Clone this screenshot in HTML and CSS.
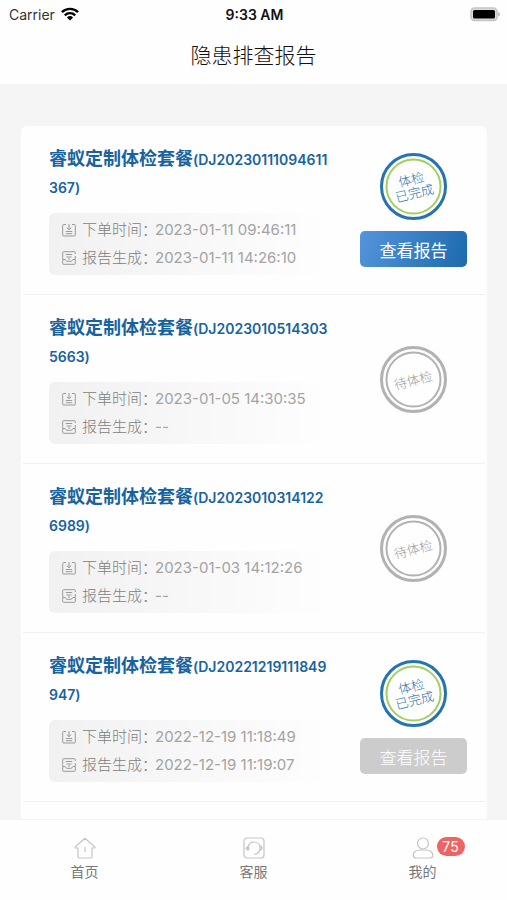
FILE: index.html
```html
<!DOCTYPE html>
<html lang="zh-CN">
<head>
<meta charset="utf-8">
<meta name="viewport" content="width=device-width, initial-scale=1">
<title>隐患排查报告</title>
<link rel="stylesheet" href="styles.css">
</head>
<body>
<svg class="sprite" aria-hidden="true">
  <symbol id="i-order" viewBox="0 0 14 14">
    <path d="M4 1.500H1.500a.8.8 0 0 0-.8.8v9.900a.8.8 0 0 0 .8.8h11a.8.8 0 0 0 .8-.8V2.300a.8.8 0 0 0-.8-.8H10M7 1v5.500M4.800 4.600 7 6.700l2.200-2.100M3.800 8.500h6.400M3.800 10.700h6.400"/>
  </symbol>
  <symbol id="i-report" viewBox="0 0 14 14">
    <path d="M13.300 3V1.500a.8.8 0 0 0-.8-.8h-11a.8.8 0 0 0-.8.8V8M13.300 5v3M.7 8.500h2.500l1.300 1.800h5l1.300-1.800h2.500v4a.8.8 0 0 1-.8.8h-11a.8.8 0 0 1-.8-.8zM3.800 3.500h6.400M4.500 6h5M6 8h2"/>
  </symbol>
  <symbol id="s-done" viewBox="0 0 67 67">
    <circle cx="33.500" cy="33.500" r="32" fill="none" stroke="#2574b0" stroke-width="3"/>
    <circle cx="33.500" cy="33.500" r="27" fill="none" stroke="#a3cf62" stroke-width="2"/>
    <g class="stamp-text" fill="#2a74ad" transform="rotate(-14 33.500 33.500)">
      <text x="33" y="31">体检</text>
      <text x="33" y="45">已完成</text>
    </g>
  </symbol>
  <symbol id="s-wait" viewBox="0 0 67 67">
    <circle cx="33.500" cy="33.500" r="32" fill="none" stroke="#b2b2b2" stroke-width="3"/>
    <circle cx="33.500" cy="33.500" r="27" fill="none" stroke="#b2b2b2" stroke-width="2"/>
    <g class="stamp-text" fill="#999" transform="rotate(-14 33.500 33.500)">
      <text x="33" y="39">待体检</text>
    </g>
  </symbol>
</svg>
<div class="app">
  <header class="header">
    <div class="status">
      <div class="carrier">
        <span>Carrier</span>
        <svg width="18" height="14" viewBox="0 0 18 14" aria-hidden="true">
          <g fill="none" stroke="#000" stroke-width="2.400">
            <path d="M.9 5.200a11.600 11.600 0 0 1 16.200 0"/>
            <path d="M3.800 8.300a7.400 7.400 0 0 1 10.400 0"/>
          </g>
          <path d="M5.900 10.400a4.500 4.500 0 0 1 6.200 0L9 13.600z"/>
        </svg>
      </div>
      <div class="clock">9:33 AM</div>
      <div class="battery">
        <svg width="30" height="15" viewBox="0 0 30 15" aria-hidden="true">
          <rect x="1" y="1" width="26" height="12.500" rx="3.500" fill="#ddd" stroke="#c4c4c4" stroke-width="1.500"/>
          <rect x="3" y="3" width="22" height="8.500" rx="1.500"/>
          <path d="M28.300 5v4.500c2-.8 2-3.700 0-4.500z" fill="#aaa"/>
        </svg>
      </div>
    </div>
    <h1 class="title">隐患排查报告</h1>
  </header>

  <main class="main">
    <ul class="list">
      <li class="item">
        <div class="info">
          <h2 class="name">睿蚁定制体检套餐<span class="code">(DJ20230111094611367)</span></h2>
          <dl class="meta">
            <div class="row"><svg class="ico"><use href="#i-order"/></svg><dt>下单时间：</dt><dd>2023-01-11 09:46:11</dd></div>
            <div class="row"><svg class="ico"><use href="#i-report"/></svg><dt>报告生成：</dt><dd>2023-01-11 14:26:10</dd></div>
          </dl>
        </div>
        <div class="side">
          <svg class="stamp"><use href="#s-done"/></svg>
          <button class="btn" type="button">查看报告</button>
        </div>
      </li>
      <li class="item">
        <div class="info">
          <h2 class="name">睿蚁定制体检套餐<span class="code">(DJ20230105143035663)</span></h2>
          <dl class="meta">
            <div class="row"><svg class="ico"><use href="#i-order"/></svg><dt>下单时间：</dt><dd>2023-01-05 14:30:35</dd></div>
            <div class="row"><svg class="ico"><use href="#i-report"/></svg><dt>报告生成：</dt><dd>--</dd></div>
          </dl>
        </div>
        <div class="side">
          <svg class="stamp"><use href="#s-wait"/></svg>
        </div>
      </li>
      <li class="item">
        <div class="info">
          <h2 class="name">睿蚁定制体检套餐<span class="code">(DJ20230103141226989)</span></h2>
          <dl class="meta">
            <div class="row"><svg class="ico"><use href="#i-order"/></svg><dt>下单时间：</dt><dd>2023-01-03 14:12:26</dd></div>
            <div class="row"><svg class="ico"><use href="#i-report"/></svg><dt>报告生成：</dt><dd>--</dd></div>
          </dl>
        </div>
        <div class="side">
          <svg class="stamp"><use href="#s-wait"/></svg>
        </div>
      </li>
      <li class="item">
        <div class="info">
          <h2 class="name">睿蚁定制体检套餐<span class="code">(DJ20221219111849947)</span></h2>
          <dl class="meta">
            <div class="row"><svg class="ico"><use href="#i-order"/></svg><dt>下单时间：</dt><dd>2022-12-19 11:18:49</dd></div>
            <div class="row"><svg class="ico"><use href="#i-report"/></svg><dt>报告生成：</dt><dd>2022-12-19 11:19:07</dd></div>
          </dl>
        </div>
        <div class="side">
          <svg class="stamp"><use href="#s-done"/></svg>
          <button class="btn btn-off" type="button" disabled>查看报告</button>
        </div>
      </li>
    </ul>
  </main>

  <nav class="tabs">
    <a class="tab" href="#home">
      <svg class="tab-ico" viewBox="0 0 22 22" aria-hidden="true"><path d="M11 1.200 1.200 9.800q-.4 1.200.6 1.200H4v8.500a1.500 1.500 0 0 0 1.500 1.500h11a1.500 1.500 0 0 0 1.500-1.500V11h2.200q1 0 .6-1.200zM11 10v5"/></svg>
      <span>首页</span>
    </a>
    <a class="tab" href="#service">
      <svg class="tab-ico" viewBox="0 0 22 22" aria-hidden="true"><rect x="1" y="1" width="20" height="20" rx="3"/><path d="M5 12.500C4.500 8 7 5 11 5c3.500 0 6 2.500 6 6s-2 6-5.500 6.300M17 8.500l2.300 2.500-2.300 2.500M5 9.500 3 11.300l2 1.900 1-1.900z"/></svg>
      <span>客服</span>
    </a>
    <a class="tab" href="#mine">
      <span class="ico-wrap">
        <svg class="tab-ico" viewBox="0 0 22 22" aria-hidden="true"><circle cx="11" cy="6.500" r="5.500"/><path d="M7.500 13h7c3.500 0 6.300 2.200 6.300 5 0 2-1 3-2.800 3H4c-1.800 0-2.800-1-2.800-3 0-2.800 2.800-5 6.300-5z"/></svg>
        <span class="badge">75</span>
      </span>
      <span>我的</span>
    </a>
  </nav>
</div>
</body>
</html>
```
FILE: styles.css
```css
* { box-sizing: border-box; margin: 0; padding: 0; }
body { font-family: Inter, "Noto Sans CJK SC", sans-serif; color: #333; background: #f5f5f5; }
.sprite { display: none; }
.app { display: flex; flex-direction: column; height: 100vh; }

.header { background: #fefefe; height: 84px; }
.status { display: grid; grid-template-columns: 1fr auto 1fr; align-items: center; height: 28px; padding: 0 7px 0 9px; font-size: 14px; }
.carrier { display: flex; align-items: center; gap: 6px; }
.clock { font-weight: 600; color: #111; }
.battery { display: flex; justify-content: flex-end; }
.title { font-size: 21px; line-height: 56px; font-weight: 300; text-align: center; color: #111; }

.main { flex: 1; min-height: 0; overflow: hidden; display: flex; padding: 42px 20px 0 21px; }
.list { flex: 1; list-style: none; background: #fefefe; border-radius: 6px 6px 0 0; }
.item { display: flex; justify-content: space-between; align-items: center; margin: 0 2px; padding: 19px 18px 19px 26px; border-bottom: 1px solid #f1f1f1; }
.info { flex: 1; max-width: 282px; }
.name { height: 56px; font-size: 18px; line-height: 28px; font-weight: 700; color: #17639f; word-break: break-all; }
.code { font-size: 14px; line-height: 20px; font-weight: 600; }
.meta { margin-top: 12px; padding: 3px 13px; border-radius: 6px; background: linear-gradient(90deg, #f1f1f1, #fefefe); color: #808080; }
.row { display: flex; align-items: center; height: 28px; font-size: 15px; line-height: 20px; font-weight: 300; white-space: nowrap; }
.row dt { width: 73px; }
.row dd { font-weight: 400; color: #a3a3a3; }
.ico { width: 14px; height: 14px; margin-right: 6px; fill: none; stroke: #999; stroke-width: 1; flex: none; }

.side { display: flex; flex-direction: column; align-items: center; gap: 11px; width: 107px; margin: -10px 0; }
.stamp { width: 67px; height: 67px; }
.stamp-text { font-size: 13px; font-weight: 300; text-anchor: middle; }
.btn { width: 100%; height: 36px; border: 0; border-radius: 5px; background: linear-gradient(110deg, #5594dc, #1c6aad); color: #fff; font: inherit; font-size: 17px; }
.btn-off { background: #ccc; font-weight: 300; }

.tabs { display: grid; grid-template-columns: repeat(3, 1fr); height: 81px; border-top: 1px solid #f3f3f3; background: #fefefe; }
.tab { display: flex; flex-direction: column; align-items: center; gap: 3px; padding-top: 17px; font-size: 14px; line-height: 20px; color: #777; text-decoration: none; }
.tab-ico { display: block; width: 22px; height: 22px; fill: none; stroke: #c4c4c4; stroke-width: 1.2; }
.ico-wrap { position: relative; }
.badge { position: absolute; left: 25px; top: 0; width: 28px; border-radius: 10px; background: #ec6464; color: #fff; font-size: 14px; line-height: 19px; text-align: center; }
```
